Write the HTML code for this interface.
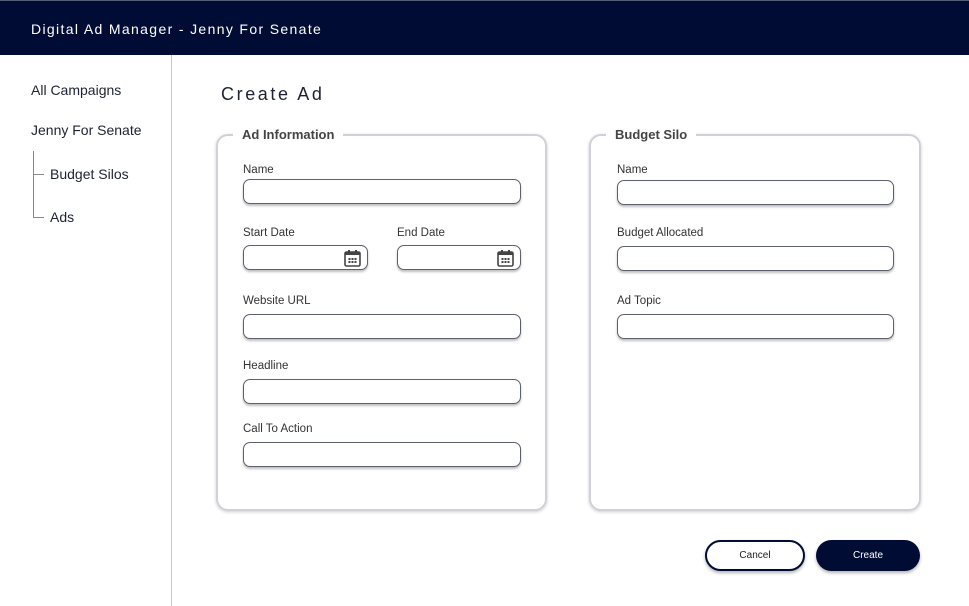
<!DOCTYPE html>
<html><head><style>
*{margin:0;padding:0;box-sizing:border-box}
body{width:969px;height:606px;background:#fff;font-family:"Liberation Sans",sans-serif;position:relative;overflow:hidden}
.hdr{position:absolute;left:0;top:0;width:969px;height:55px;background:#000c33;border-top:1px solid #555d78}
.hdr span{position:absolute;left:31px;top:20px;color:#fff;font-size:14px;letter-spacing:1.35px}
.side{position:absolute;left:171px;top:55px;width:1px;height:551px;background:#c8c8c8}
.nav{position:absolute;font-size:14px;color:#1d2233}
.tree{position:absolute;background:#888}
h1{position:absolute;left:221px;top:84px;font-size:18px;font-weight:normal;color:#1d2233;letter-spacing:2.6px}
.fs{position:absolute;border:2.5px solid #d0d1d8;border-radius:12px;box-shadow:0 1px 3px rgba(0,0,0,.2)}
.lg{position:absolute;background:#fff;padding:0 9px;font-size:13px;font-weight:bold;color:#444;top:-9px}
.lb{position:absolute;font-size:11.5px;color:#333}
.in{position:absolute;height:25px;border:1.5px solid #5d6070;border-radius:7px;box-shadow:0 2px 2px rgba(0,0,0,.25);background:#fff}
.cal{position:absolute;right:6px;top:3px}
.btn{position:absolute;height:31px;border-radius:16px;font-size:10px;text-align:center;line-height:29px;box-shadow:0 2px 3px rgba(0,0,0,.3)}
</style></head><body>
<div class="hdr"><span>Digital Ad Manager - Jenny For Senate</span></div>
<div class="side"></div>
<div class="nav" style="left:31px;top:82px">All Campaigns</div>
<div class="nav" style="left:31px;top:122px">Jenny For Senate</div>
<div class="tree" style="left:33px;top:151px;width:1px;height:66px"></div>
<div class="tree" style="left:33px;top:174px;width:11px;height:1px"></div>
<div class="tree" style="left:33px;top:217px;width:11px;height:1px"></div>
<div class="nav" style="left:50px;top:166px">Budget Silos</div>
<div class="nav" style="left:50px;top:209px">Ads</div>
<h1>Create Ad</h1>

<div class="fs" style="left:216px;top:134px;width:331px;height:377px"><div class="lg" style="left:15px">Ad Information</div></div>
<div class="fs" style="left:589px;top:134px;width:332px;height:377px"><div class="lg" style="left:15px">Budget Silo</div></div>

<div class="lb" style="left:243px;top:164px">Name</div>
<div class="in" style="left:243px;top:179px;width:278px"></div>
<div class="lb" style="left:243px;top:227px">Start Date</div>
<div class="in" style="left:243px;top:245px;width:125px"><svg class="cal" width="17" height="18" viewBox="0 0 17 18"><rect x="1" y="3" width="15" height="14" rx="1.5" fill="#fff" stroke="#444" stroke-width="1.6"/><rect x="1" y="3" width="15" height="3" fill="#444"/><rect x="4" y="1" width="2" height="4" fill="#444"/><rect x="11" y="1" width="2" height="4" fill="#444"/><g fill="#444"><rect x="4.5" y="9" width="2" height="2"/><rect x="7.5" y="9" width="2" height="2"/><rect x="10.5" y="9" width="2" height="2"/><rect x="4.5" y="12" width="2" height="2"/><rect x="7.5" y="12" width="2" height="2"/><rect x="10.5" y="12" width="2" height="2"/></g></svg></div>
<div class="lb" style="left:397px;top:227px">End Date</div>
<div class="in" style="left:397px;top:245px;width:124px"><svg class="cal" width="17" height="18" viewBox="0 0 17 18"><rect x="1" y="3" width="15" height="14" rx="1.5" fill="#fff" stroke="#444" stroke-width="1.6"/><rect x="1" y="3" width="15" height="3" fill="#444"/><rect x="4" y="1" width="2" height="4" fill="#444"/><rect x="11" y="1" width="2" height="4" fill="#444"/><g fill="#444"><rect x="4.5" y="9" width="2" height="2"/><rect x="7.5" y="9" width="2" height="2"/><rect x="10.5" y="9" width="2" height="2"/><rect x="4.5" y="12" width="2" height="2"/><rect x="7.5" y="12" width="2" height="2"/><rect x="10.5" y="12" width="2" height="2"/></g></svg></div>
<div class="lb" style="left:243px;top:295px">Website URL</div>
<div class="in" style="left:243px;top:314px;width:278px"></div>
<div class="lb" style="left:243px;top:360px">Headline</div>
<div class="in" style="left:243px;top:379px;width:278px"></div>
<div class="lb" style="left:243px;top:423px">Call To Action</div>
<div class="in" style="left:243px;top:442px;width:278px"></div>

<div class="lb" style="left:617px;top:164px">Name</div>
<div class="in" style="left:617px;top:180px;width:277px"></div>
<div class="lb" style="left:617px;top:227px">Budget Allocated</div>
<div class="in" style="left:617px;top:246px;width:277px"></div>
<div class="lb" style="left:617px;top:295px">Ad Topic</div>
<div class="in" style="left:617px;top:314px;width:277px"></div>

<div class="btn" style="left:705px;top:540px;width:100px;border:2px solid #000c33;color:#222;background:#fff;line-height:27px">Cancel</div>
<div class="btn" style="left:816px;top:540px;width:104px;background:#000c33;color:#fff;line-height:31px">Create</div>
</body></html>
